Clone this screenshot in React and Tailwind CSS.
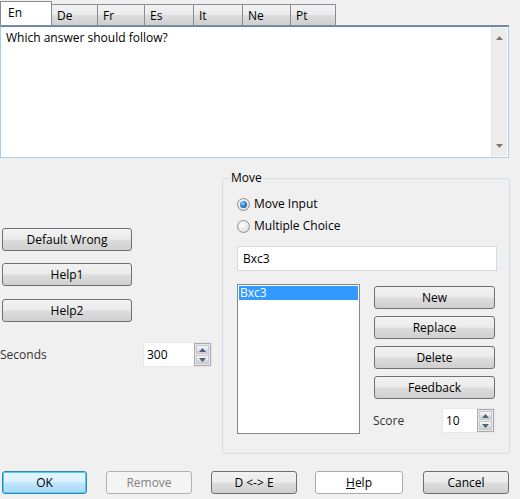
const btnBg =
  "bg-[linear-gradient(to_bottom,#f2f2f2_0%,#ebebeb_48%,#dddddd_52%,#cfcfcf_100%)]"

function Btn({ children, className = '', variant = 'normal' }) {
  let look = `border border-[#707070] ${btnBg} text-black`
  if (variant === 'default')
    look =
      "border border-[#3c7fb1] shadow-[inset_0_0_0_1px_#48d2fb] bg-[linear-gradient(to_bottom,#eaf6fd_0%,#d9f0fc_48%,#bee6fd_52%,#a7d9f5_100%)] text-black"
  if (variant === 'disabled') look = 'border border-[#adb2b5] bg-[#f4f4f4] text-[#838383]'
  if (variant === 'flat') look = 'border border-[#adadad] bg-white text-black'
  return (
    <div
      className={`flex items-center justify-center rounded-[3px] h-[23px] text-[12px] leading-none ${look} ${className}`}
    >
      {children}
    </div>
  )
}

function Tri({ up }) {
  return (
    <svg width="7" height="4" viewBox="0 0 7 4">
      {up ? (
        <path d="M0 4 L3.5 0 L7 4 Z" fill="#4d6185" />
      ) : (
        <path d="M0 0 L3.5 4 L7 0 Z" fill="#4d6185" />
      )}
    </svg>
  )
}

function Spin({ value, className = '' }) {
  return (
    <div className={`flex h-[25px] bg-white border border-[#e3e9ef] ${className}`}>
      <div className="flex-1 flex items-center pl-[3px] text-[12px] text-black">{value}</div>
      <div className="flex flex-col w-[17px] border border-[#a9a9a9] bg-[#e9e9e9] p-[1px] gap-[1px]">
        <div className={`flex-1 flex items-center justify-center border border-[#c8c8c8] ${btnBg}`}>
          <Tri up />
        </div>
        <div className={`flex-1 flex items-center justify-center border border-[#c8c8c8] ${btnBg}`}>
          <Tri />
        </div>
      </div>
    </div>
  )
}

function Radio({ checked, label }) {
  return (
    <div className="flex items-center h-[16px] gap-[4px]">
      <div className="w-[13px] h-[13px] rounded-full border border-[#8e8f8f] bg-[radial-gradient(circle_at_40%_35%,#ffffff_0%,#e6e6e6_60%,#cfcfcf_100%)] flex items-center justify-center">
        {checked && (
          <div className="w-[7px] h-[7px] rounded-full bg-[radial-gradient(circle_at_40%_35%,#8adcff_0%,#2b7bc6_50%,#174f8a_100%)]" />
        )}
      </div>
      <span className="text-[12px] text-black">{label}</span>
    </div>
  )
}

const tabs = ['De', 'Fr', 'Es', 'It', 'Ne', 'Pt']
const tabW = [46, 47, 49, 49, 48, 45]

export default function App() {
  return (
    <div className="w-[520px] h-[499px] bg-[#f0f0f0] overflow-hidden font-['Segoe_UI','Open_Sans',sans-serif] text-[12px] text-black">
      {/* tabs */}
      <div className="flex items-end h-[25px] pt-[1px]">
        <div className="w-[52px] h-[24px] bg-white border border-b-0 border-[#898c95] pl-[7px] pt-[2px] relative z-10">
          En
        </div>
        {tabs.map((t, i) => (
          <div
            key={t}
            style={{ width: tabW[i] }}
            className="h-[21px] border border-l-0 border-b-0 border-[#898c95] pl-[5px] pt-[2px] bg-[linear-gradient(to_bottom,#f2f2f2_0%,#ebebeb_48%,#dddddd_52%,#cfcfcf_100%)]"
          >
            {t}
          </div>
        ))}
      </div>
      {/* memo */}
      <div className="w-[509px] border-t border-[#898c95]">
        <div className="h-[132px] bg-white border border-t-[#5a87b3] border-[#a9cde8] flex">
          <div className="flex-1 pl-[5px] pt-[2px]">Which answer should follow?</div>
          <div className="w-[16px] my-[1px] mr-[1px] bg-[#ececec] border-l border-[#e0e0e0] flex flex-col justify-between items-center py-[8px]">
            <svg width="7" height="4" viewBox="0 0 7 4">
              <path d="M0 4 L3.5 0 L7 4 Z" fill="#7a7a7a" />
            </svg>
            <svg width="7" height="4" viewBox="0 0 7 4">
              <path d="M0 0 L3.5 4 L7 0 Z" fill="#7a7a7a" />
            </svg>
          </div>
        </div>
      </div>

      {/* lower section */}
      <div className="flex mt-[20px] h-[276px]">
        <div className="w-[222px] pt-[50px] flex flex-col">
          <Btn className="ml-[2px] w-[130px]">Default Wrong</Btn>
          <Btn className="ml-[2px] w-[130px] mt-[12px]">Help1</Btn>
          <Btn className="ml-[2px] w-[130px] mt-[13px]">Help2</Btn>
          <div className="flex items-center mt-[20px]">
            <span className="w-[143px] text-[#333]">Seconds</span>
            <Spin value="300" className="w-[69px]" />
          </div>
        </div>

        <div className="relative w-[288px] h-[276px] border border-[#d5dfe5] rounded-[3px] pl-[14px] pt-[17px]">
          <span className="absolute left-[7px] top-[-9px] bg-[#f0f0f0] px-[1px] leading-[16px]">Move</span>
          <Radio checked label="Move Input" />
          <div className="mt-[6px]">
            <Radio label="Multiple Choice" />
          </div>
          <div className="mt-[12px] w-[260px] h-[25px] bg-white border border-[#d6dbe1] flex items-center pl-[5px]">
            Bxc3
          </div>
          <div className="flex mt-[13px]">
            <div className="w-[123px] h-[150px] bg-white border border-[#828790] p-[1px]">
              <div className="h-[14px] bg-[#3399ff] text-white leading-[14px] pl-[1px]">Bxc3</div>
            </div>
            <div className="ml-[14px] pt-[2px] flex flex-col">
              <Btn className="w-[121px]">New</Btn>
              <Btn className="w-[121px] mt-[7px]">Replace</Btn>
              <Btn className="w-[121px] mt-[7px]">Delete</Btn>
              <Btn className="w-[121px] mt-[7px]">Feedback</Btn>
              <div className="flex items-center mt-[9px]">
                <span className="w-[69px] -ml-[1px] text-[#333]">Score</span>
                <Spin value="10" className="w-[53px]" />
              </div>
            </div>
          </div>
        </div>
      </div>

      {/* bottom buttons */}
      <div className="flex mt-[17px] pl-[2px]">
        <Btn variant="default" className="w-[85px]">OK</Btn>
        <Btn variant="disabled" className="w-[86px] ml-[19px]">Remove</Btn>
        <Btn className="w-[86px] ml-[19px]">D &lt;-&gt; E</Btn>
        <Btn variant="flat" className="w-[88px] ml-[18px]">
          <span><span className="underline">H</span>elp</span>
        </Btn>
        <Btn className="w-[86px] ml-[20px]">Cancel</Btn>
      </div>
    </div>
  )
}
